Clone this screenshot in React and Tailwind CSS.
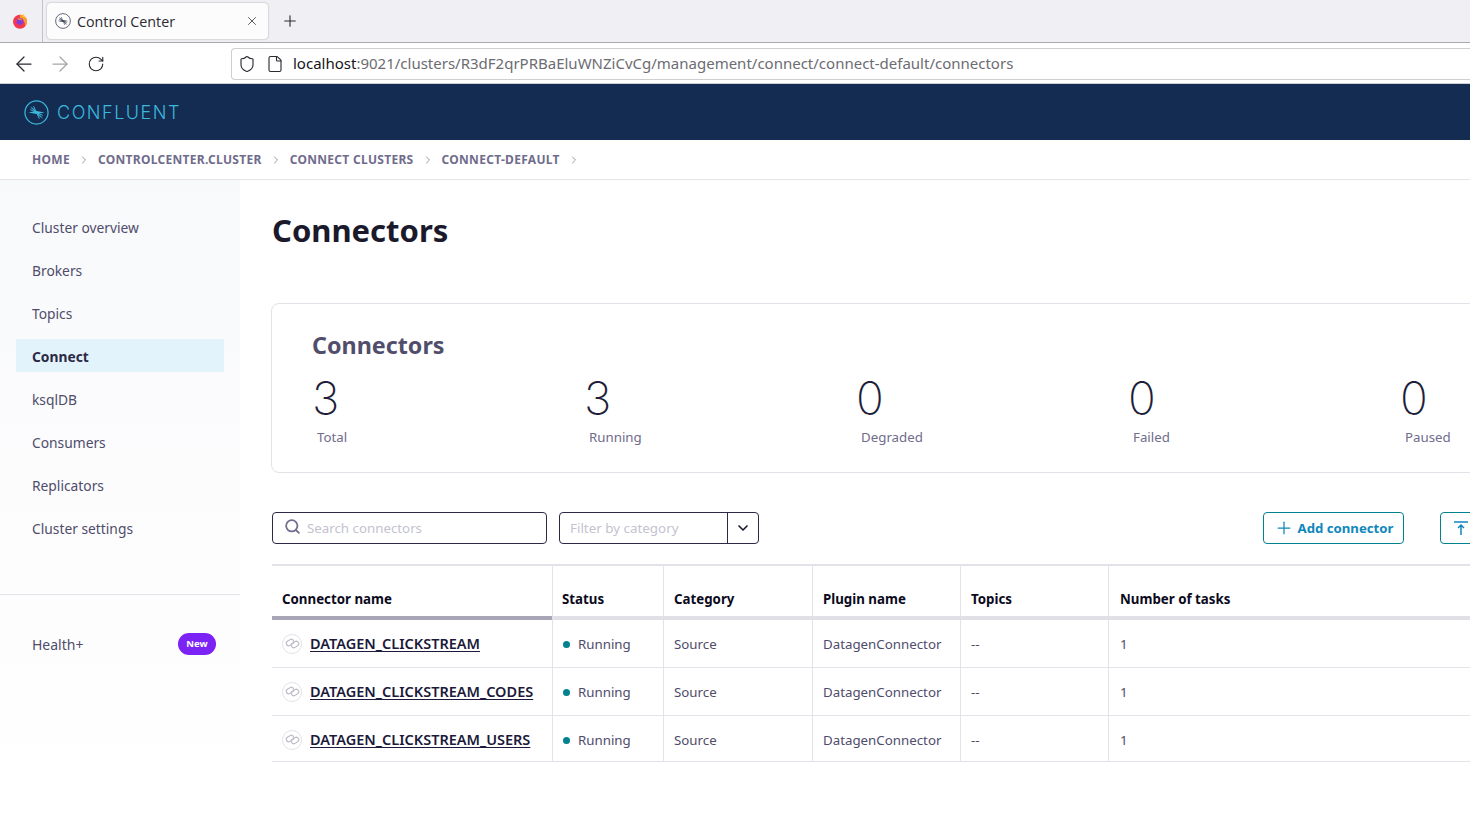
import React from 'react';
import { ArrowLeft, ArrowRight, RotateCw, Shield, File, Plus, X, Search, ChevronDown, ChevronRight } from 'lucide-react';

const navItems = ['Cluster overview', 'Brokers', 'Topics', 'Connect', 'ksqlDB', 'Consumers', 'Replicators', 'Cluster settings'];
const crumbs = ['HOME', 'CONTROLCENTER.CLUSTER', 'CONNECT CLUSTERS', 'CONNECT-DEFAULT'];
const stats = [
  { value: 3, label: 'Total' },
  { value: 3, label: 'Running' },
  { value: 0, label: 'Degraded' },
  { value: 0, label: 'Failed' },
  { value: 0, label: 'Paused' },
];
const connectors = ['DATAGEN_CLICKSTREAM', 'DATAGEN_CLICKSTREAM_CODES', 'DATAGEN_CLICKSTREAM_USERS'];
const columns = ['Connector name', 'Status', 'Category', 'Plugin name', 'Topics', 'Number of tasks'];
const gridCols = 'grid grid-cols-[280px_111px_149px_148px_148px_1fr]';

const Spark = ({ className }) => (
  <svg viewBox="0 0 26 26" className={className} fill="none" stroke="currentColor">
    <circle cx="13" cy="13" r="12" strokeWidth="1.3" />
    <g strokeWidth="1">
      <path d="M13 13 6.5 10M13 13 7 7.5M13 13 10 6.5M13 13l6.5 3M13 13l6 5.500M13 13l3 6.500" />
      <path d="M13 13 8.500 8M13 13l4.500 5" />
    </g>
    <path d="M4.500 13 13 11.500 21.500 13 13 14.500z" fill="currentColor" stroke="none" />
  </svg>
);

const Firefox = () => (
  <svg viewBox="0 0 16 16" className="w-4 h-4">
    <circle cx="8" cy="8.700" r="7" fill="#f5364f" />
    <path d="M8 1.700a7 7 0 0 1 7 7c0 2.300-1 3.900-2.200 5 .8-3.400-.6-7.200-4.800-8.400z" fill="#ff9a2e" />
    <path d="M10.800 .5c.6 1.500 2.800 2.600 3.400 5-1-1-2.400-1.700-3.600-1.800z" fill="#ffcb2e" />
    <circle cx="8" cy="8.400" r="3.300" fill="#7b3fe0" />
    <path d="M5 5.800c2-1.400 5-.4 5.600 2-1-.9-2.400-.9-3.200-.5z" fill="#ff8a2e" />
  </svg>
);

const LinkBadge = () => (
  <span className="w-5 h-5 rounded-full border border-[#e3e3ea] flex items-center justify-center shrink-0">
    <svg viewBox="0 0 14 14" className="w-[15px] h-[15px] text-[#b9b9c6]" fill="none" stroke="currentColor" strokeWidth="1">
      <rect x="1" y="3.800" width="7.400" height="4.600" rx="2.300" transform="rotate(-32 4.700 6.100)" />
      <rect x="5.600" y="5.600" width="7.400" height="4.600" rx="2.300" transform="rotate(-32 9.300 7.900)" />
    </svg>
  </span>
);

export default function App() {
  return (
    <div className="w-[1470px] h-[816px] overflow-hidden bg-white text-[14px] text-[#4f4c6b] font-['Noto_Sans',sans-serif]">
      {/* Browser tab strip */}
      <div className="h-[43px] bg-[#f0f0f4] border-b border-[#a9a9ab] flex font-['Open_Sans',sans-serif]">
        <div className="w-[43px] border-r border-[#c4c4c7] flex items-center justify-center pr-[3px]">
          <Firefox />
        </div>
        <div className="ml-[4px] mt-[3px] w-[221px] h-[36px] bg-[#fcfcfd] rounded-[4px] shadow-[0_0_2px_rgba(0,0,0,0.35)] flex items-center pl-[8px] pr-[9px]">
          <Spark className="w-4 h-4 text-[#3f4658]" />
          <span className="ml-[6px] pt-[2px] flex-1 text-[14.300px] text-[#2b2a33]">Control Center</span>
          <X className="w-3.5 h-3.5 text-[#45454d]" strokeWidth={1.5} />
        </div>
        <div className="ml-[13px] flex items-center">
          <Plus className="w-[18px] h-[18px] text-[#2b2a33]" strokeWidth={1.5} />
        </div>
      </div>

      {/* Address bar */}
      <div className="h-[41px] bg-white border-b border-[#cfcfd2] flex items-center pt-[1px]">
        <ArrowLeft className="ml-[12px] w-6 h-6 text-[#2b2a33]" strokeWidth={1.25} />
        <ArrowRight className="ml-[12px] w-6 h-6 text-[#a5a5a9]" strokeWidth={1.25} />
        <RotateCw className="ml-[15px] w-[18px] h-[18px] text-[#2b2a33]" strokeWidth={1.5} />
        <div className="ml-[126px] h-[32px] flex-1 border border-[#cfcfd2] border-r-0 rounded-l-[4px] flex items-center pl-[6px]">
          <Shield className="w-[18px] h-[18px] text-[#2b2a33]" strokeWidth={1.5} />
          <File className="ml-[10px] w-[18px] h-[18px] text-[#2b2a33]" strokeWidth={1.5} />
          <span className="ml-[9px] text-[15px] text-[#6c6c72] whitespace-nowrap">
            <span className="text-[#15141a]">localhost</span>:9021/clusters/R3dF2qrPRBaEluWNZiCvCg/management/connect/connect-default/connectors
          </span>
        </div>
      </div>

      {/* Confluent header */}
      <div className="h-[56px] bg-[#142c52] flex items-center pl-[24px] text-[#3cb8dc]">
        <Spark className="w-[25px] h-[25px]" />
        <span className="ml-[8px] text-[18px] tracking-[0.085em] font-['Inter',sans-serif] font-light">CONFLUENT</span>
      </div>

      {/* Breadcrumbs */}
      <div className="h-[40px] border-b border-[#e6e6ea] flex items-center pl-[32px] text-[12px] tracking-[0.3px] font-bold text-[#6f6c8c]">
        {crumbs.map((c) => (
          <React.Fragment key={c}>
            <span>{c}</span>
            <ChevronRight className="mx-[8px] w-3 h-3 text-[#9a98ad]" />
          </React.Fragment>
        ))}
      </div>

      <div className="flex">
        {/* Sidebar */}
        <div className="w-[240px] h-[636px] shrink-0 bg-linear-to-b from-[#f8f9fb] via-[#fcfcfd] to-white">
          <div className="pt-[30px] flex flex-col gap-[10px] px-[16px]">
            {navItems.map((item) => (
              <div
                key={item}
                className={`h-[33px] pl-[16px] pt-[4px] flex items-center text-[13.800px] ${item === 'Connect' ? 'bg-[#e3f3fc] font-bold text-[#2b2945]' : 'text-[#4f4c6b]'}`}
              >
                {item}
              </div>
            ))}
          </div>
          <div className="mt-[50px] h-px bg-[#e4e4ea]" />
          <div className="mt-[37px] pl-[32px] pr-[24px] flex items-center justify-between h-[24px]">
            <span>Health+</span>
            <span className="h-[22px] w-[38px] rounded-full bg-[#7b22f5] text-white text-[9.500px] font-bold flex items-center justify-center">New</span>
          </div>
        </div>

        {/* Main */}
        <div className="flex-1 min-w-0 pl-[32px]">
          <h1 className="mt-[27px] h-[46px] leading-[46px] text-[31px] font-bold text-[#1b1a2c]">Connectors</h1>

          <div className="mt-[50px] -ml-[1px] w-[1300px] h-[170px] border border-[#e2e2e8] rounded-lg pl-[40px] pt-[23px]">
            <div className="h-[36px] leading-[36px] text-[23.300px] font-bold text-[#514e6b]">Connectors</div>
            <div className="flex mt-[11px]">
              {stats.map((s) => (
                <div key={s.label} className="w-[272px] shrink-0">
                  <div className="h-[48px] leading-[48px] text-[46px] font-extralight text-[#1f1e3a] font-['Inter',sans-serif]">{s.value}</div>
                  <div className="mt-[5px] pl-[5px] h-[20px] leading-[20px] text-[13.300px] text-[#6f6c8c]">{s.label}</div>
                </div>
              ))}
            </div>
          </div>

          {/* Toolbar */}
          <div className="mt-[39px] h-[32px] flex w-[1209px]">
            <div className="w-[275px] border border-[#2b2945] rounded-[4px] flex items-center pl-[11px]">
              <Search className="w-[17px] h-[17px] text-[#6f6c8c] -mt-[3px]" strokeWidth={2.5} />
              <span className="ml-[6px] pt-[2px] text-[13.300px] text-[#c4c3d0]">Search connectors</span>
            </div>
            <div className="ml-[12px] w-[200px] border border-[#2b2945] rounded-[4px] flex">
              <span className="flex-1 pl-[10px] pt-[1px] flex items-center text-[13.400px] text-[#c4c3d0]">Filter by category</span>
              <span className="w-[31px] border-l border-[#2b2945] flex items-center justify-center">
                <ChevronDown className="w-4 h-4 text-[#1b1a2c]" strokeWidth={2.5} />
              </span>
            </div>
            <div className="ml-auto w-[141px] border border-[#00838f] rounded-[4px] flex items-center justify-center gap-[4px] text-[13.200px] text-[#0f87bb] font-bold">
              <Plus className="w-5 h-5" strokeWidth={1.5} />
              <span className="pt-[2px]">Add connector</span>
            </div>
            <div className="ml-[36px] w-[41px] shrink-0 border border-[#00838f] rounded-[4px] flex items-center justify-center text-[#0f87bb]">
              <svg viewBox="0 0 16 16" className="w-4 h-4" fill="none" stroke="currentColor" strokeWidth="1.5">
                <path d="M1 2h14M8 15V5M5 8l3-3 3 3" />
              </svg>
            </div>
          </div>

          {/* Table */}
          <div className="mt-[20px] border-t-2 border-[#e2e2e8] w-[1300px] text-[13.300px]">
            <div className={`${gridCols} h-[54px] border-b-4 border-[#e0e0e6]`}>
              {columns.map((c, i) => (
                <div
                  key={c}
                  className={`relative pt-[24px] font-bold text-[#0b0a1c] ${i > 0 ? 'border-l border-[#e2e2e8]' : ''} ${i === 1 ? 'pl-[9px]' : i === 5 ? 'pl-[11px]' : 'pl-[10px]'}`}
                >
                  {c}
                  {i === 0 && <span className="absolute left-0 right-0 -bottom-[4px] h-[4px] bg-[#a8a6b6]" />}
                </div>
              ))}
            </div>
            {connectors.map((name, i) => {
              const pad = i === 2 ? 'pt-[4px]' : 'pt-[2px]';
              return (
                <div key={name} className={`${gridCols} ${i === 2 ? 'h-[46px]' : 'h-[48px]'} border-b border-[#e2e2e8] text-[#4f4c6b]`}>
                  <div className={`px-[10px] flex items-center gap-[8px] ${i === 2 ? 'pt-[2px]' : ''}`}>
                    <LinkBadge />
                    <span className="text-[14.500px] font-semibold text-[#1b1a3a] underline underline-offset-2 whitespace-nowrap">{name}</span>
                  </div>
                  <div className={`border-l border-[#e2e2e8] pl-[10px] flex items-center ${pad}`}>
                    <span className="w-[7px] h-[7px] rounded-full bg-[#00838f] mr-[8px]" />
                    Running
                  </div>
                  <div className={`border-l border-[#e2e2e8] pl-[10px] flex items-center ${pad}`}>Source</div>
                  <div className={`border-l border-[#e2e2e8] pl-[10px] flex items-center ${pad}`}>DatagenConnector</div>
                  <div className={`border-l border-[#e2e2e8] pl-[10px] flex items-center ${pad}`}>--</div>
                  <div className={`border-l border-[#e2e2e8] pl-[11px] flex items-center ${pad}`}>1</div>
                </div>
              );
            })}
          </div>
        </div>
      </div>
    </div>
  );
}
